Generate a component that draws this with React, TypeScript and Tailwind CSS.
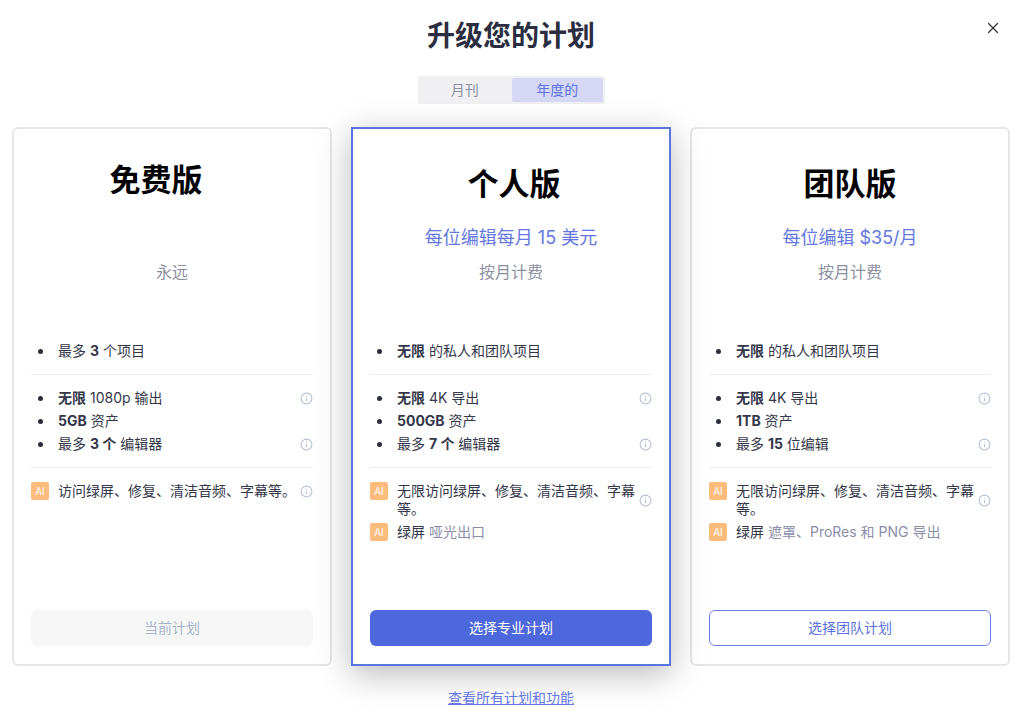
import { Fragment, useState } from 'react';
import clsx from 'clsx';
import { Info, X } from 'lucide-react';

interface Part {
  text: string;
  style?: 'bold' | 'muted';
}

interface Feature {
  parts: Part[];
  info?: boolean;
  ai?: boolean;
}

interface Plan {
  id: string;
  name: string;
  price?: string;
  billing: string;
  groups: Feature[][];
  action: string;
}

const plans: Plan[] = [
  {
    id: 'free',
    name: '免费版',
    billing: '永远',
    groups: [
      [{ parts: [{ text: '最多' }, { text: '3', style: 'bold' }, { text: '个项目' }] }],
      [
        { parts: [{ text: '无限', style: 'bold' }, { text: '1080p 输出' }], info: true },
        { parts: [{ text: '5GB', style: 'bold' }, { text: '资产' }] },
        { parts: [{ text: '最多' }, { text: '3 个', style: 'bold' }, { text: '编辑器' }], info: true },
      ],
      [{ parts: [{ text: '访问绿屏、修复、清洁音频、字幕等。' }], info: true, ai: true }],
    ],
    action: '当前计划',
  },
  {
    id: 'pro',
    name: '个人版',
    price: '每位编辑每月 15 美元',
    billing: '按月计费',
    groups: [
      [{ parts: [{ text: '无限', style: 'bold' }, { text: '的私人和团队项目' }] }],
      [
        { parts: [{ text: '无限', style: 'bold' }, { text: '4K 导出' }], info: true },
        { parts: [{ text: '500GB', style: 'bold' }, { text: '资产' }] },
        { parts: [{ text: '最多' }, { text: '7 个', style: 'bold' }, { text: '编辑器' }], info: true },
      ],
      [
        { parts: [{ text: '无限访问绿屏、修复、清洁音频、字幕等。' }], info: true, ai: true },
        { parts: [{ text: '绿屏' }, { text: '哑光出口', style: 'muted' }], ai: true },
      ],
    ],
    action: '选择专业计划',
  },
  {
    id: 'team',
    name: '团队版',
    price: '每位编辑 $35/月',
    billing: '按月计费',
    groups: [
      [{ parts: [{ text: '无限', style: 'bold' }, { text: '的私人和团队项目' }] }],
      [
        { parts: [{ text: '无限', style: 'bold' }, { text: '4K 导出' }], info: true },
        { parts: [{ text: '1TB', style: 'bold' }, { text: '资产' }] },
        { parts: [{ text: '最多' }, { text: '15', style: 'bold' }, { text: '位编辑' }], info: true },
      ],
      [
        { parts: [{ text: '无限访问绿屏、修复、清洁音频、字幕等。' }], info: true, ai: true },
        { parts: [{ text: '绿屏' }, { text: '遮罩、ProRes 和 PNG 导出', style: 'muted' }], ai: true },
      ],
    ],
    action: '选择团队计划',
  },
];

function FeatureRow({ feature }: { feature: Feature }) {
  return (
    <li className="flex items-start text-sm leading-[18px]">
      <span className="mr-[9px] w-[18px] h-[18px] flex-none flex items-center justify-center">
        {feature.ai ? (
          <span className="w-full h-full rounded-xs bg-[#fdbb7c] text-white text-[10px] text-center">AI</span>
        ) : (
          <span className="w-[5px] h-[5px] rounded-full bg-[#2b2d3a]" />
        )}
      </span>
      <span className="flex-1">
        {feature.parts.map((part, i) => (
          <Fragment key={i}>
            {i > 0 && ' '}
            <span
              className={clsx(part.style === 'bold' && 'font-bold', part.style === 'muted' && 'text-[#8b8da8]')}
            >
              {part.text}
            </span>
          </Fragment>
        ))}
      </span>
      {feature.info && (
        <button type="button" aria-label="详情" className="ml-[2px] flex-none self-center text-[#b4c0d4]">
          <Info size={13} strokeWidth={2} />
        </button>
      )}
    </li>
  );
}

function PlanCard({ plan }: { plan: Plan }) {
  return (
    <section
      className={clsx(
        'flex flex-col border-2 px-[17px] pb-[18px] pt-[31px]',
        plan.id === 'pro'
          ? 'relative z-10 border-[#5b74e0] bg-white shadow-[0_8px_32px_rgba(0,0,0,0.28)]'
          : 'rounded-md border-[#e6e6e7]',
      )}
    >
      <div className="text-center">
        <h2
          className={clsx(
            'h-11 flex justify-center text-[31px] leading-10 font-bold text-black',
            plan.id === 'free' ? 'items-start pr-8' : 'items-end',
            plan.id === 'pro' && 'pl-1.5',
          )}
        >
          {plan.name}
        </h2>
        <p className="mt-5 h-7 text-lg leading-7 text-[#6478e0]">{plan.price}</p>
        <p className="mt-2 text-base leading-6 text-[#8d909f]">{plan.billing}</p>
      </div>

      <div className="mt-11 pb-[55px] divide-y divide-[#eeeeef]">
        {plan.groups.map((group, i) => (
          <ul key={i} className="flex flex-col gap-[5px] py-[14px]">
            {group.map((feature, j) => (
              <FeatureRow key={j} feature={feature} />
            ))}
          </ul>
        ))}
      </div>

      <button
        type="button"
        disabled={plan.id === 'free'}
        className={clsx(
          'mt-auto h-9 w-full rounded-md text-sm',
          plan.id === 'free' && 'bg-[#f6f6f6] text-[#a9b4c8]',
          plan.id === 'pro' && 'bg-[#4d68dd] text-white',
          plan.id === 'team' && 'border border-[#6c82e8] bg-white text-[#5b72e0]',
        )}
      >
        {plan.action}
      </button>
    </section>
  );
}

export default function App() {
  const [period, setPeriod] = useState('yearly');
  const periods = [
    { id: 'monthly', label: '月刊' },
    { id: 'yearly', label: '年度的' },
  ];

  return (
    <main className="min-h-screen bg-white pt-4 pb-1 pl-3 pr-[14px] font-['Inter','Noto_Sans_CJK_SC',sans-serif] text-[#34374a]">
      <header className="grid grid-cols-[1fr_auto_1fr] items-start">
        <h1 className="col-start-2 text-[28px] leading-10 font-bold text-[#2b2e40]">升级您的计划</h1>
        <button type="button" aria-label="关闭" className="justify-self-end mt-[3px] mr-2 text-[#33343c]">
          <X size={18} strokeWidth={1.75} />
        </button>
      </header>

      <div className="mx-auto mt-5 flex h-7 w-[187px] gap-[2px] rounded-xs bg-[#f0f0f2] p-[2px]">
        {periods.map((p) => (
          <button
            key={p.id}
            type="button"
            aria-pressed={period === p.id}
            onClick={() => setPeriod(p.id)}
            className={clsx(
              'flex-1 rounded-xs text-sm leading-6',
              period === p.id ? 'bg-[#d5d7f4] text-[#5b72e0]' : 'text-[#8d8fa3]',
            )}
          >
            {p.label}
          </button>
        ))}
      </div>

      <div className="mt-[23px] grid grid-cols-3 gap-[19px]">
        {plans.map((plan) => (
          <PlanCard key={plan.id} plan={plan} />
        ))}
      </div>

      <p className="relative z-10 mt-[22px] text-center text-sm leading-5">
        <a href="#plans" className="text-[#6478e0] underline">
          查看所有计划和功能
        </a>
      </p>
    </main>
  );
}
